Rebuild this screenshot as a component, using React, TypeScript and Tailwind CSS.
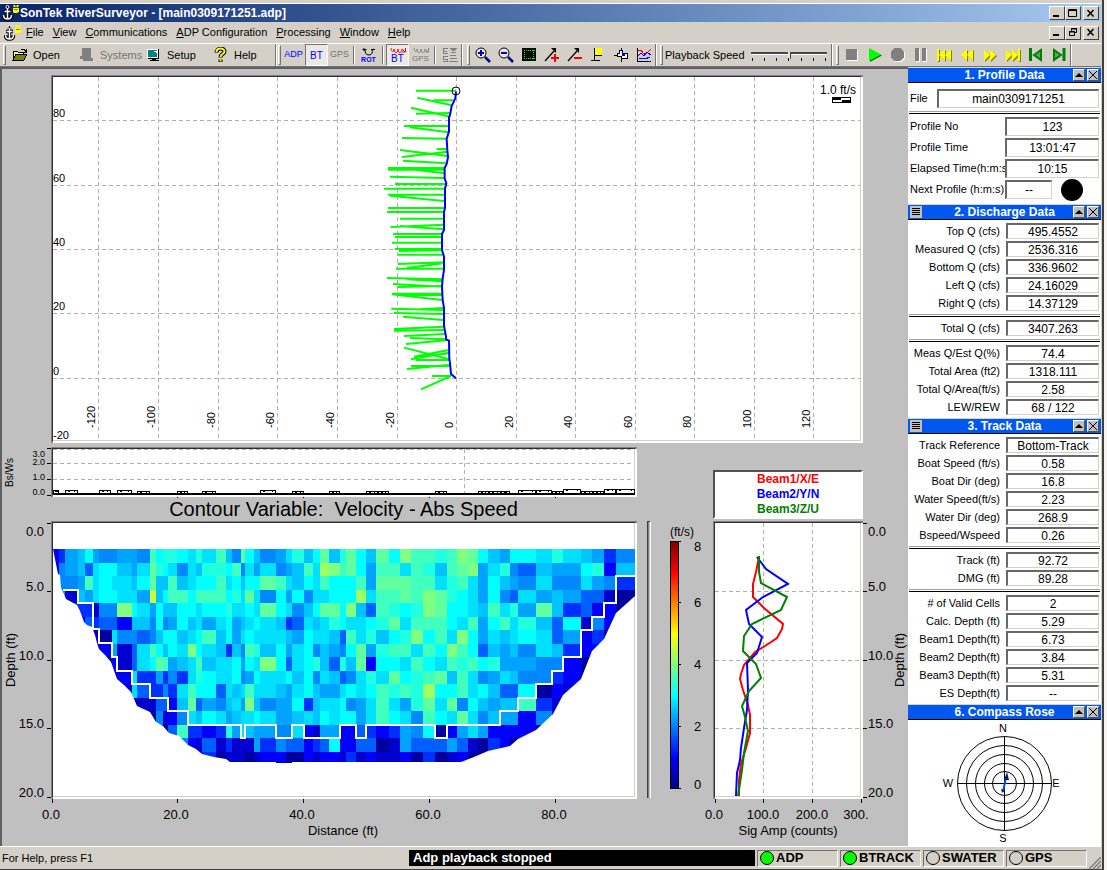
import { FC, ReactNode } from "react";

const raised = "border border-t-white border-l-white border-b-[#404040] border-r-[#404040] bg-[#d4d0c8]";

// Lower edge of each depth cell and left edge of each profile, in chart pixels
const rowEdges = [549, 563, 576, 590, 603, 617, 630, 644, 657, 671, 684, 698, 711, 725, 738, 752, 764];
const colEdges = [
  53, 59, 65, 78, 85, 93, 99, 112, 117, 132, 137, 150, 156, 163, 168, 177, 188, 196, 202, 216, 226, 232, 241, 245, 254,
  260, 276, 286, 292, 304, 313, 320, 329, 340, 346, 356, 366, 376, 389, 400, 411, 423, 435, 447, 457, 468, 478, 488, 500,
  510, 518, 536, 552, 563, 581, 592, 604, 616, 635,
];

const speedColors: Record<string, string> = {
  "0": "#00009f",
  "1": "#0000cf",
  "2": "#0000ff",
  "3": "#0030ff",
  "4": "#0060ff",
  "5": "#0088ff",
  "6": "#00a4ff",
  "7": "#00c4ff",
  "8": "#00e0ff",
  "9": "#00ffff",
  a: "#20ffdf",
  b: "#40ffbf",
  c: "#60ff9f",
  d: "#80ff80",
  e: "#a0ff60",
  f: "#c8ff38",
};

// One digit per cell, 0 is the slowest water
const speeds = [
  "23679655665b9aa98a8b75c97568a79c7ac97c9dbbabdc976998a87635",
  "25674899768ca98587aa9b5868567b8edbc96bb8ba7bcd68a547669a27",
  "5556b898879c77b7899b89799cb8798b999b6cccbb8ab8697658558653",
  "55176899886f79bb9bbb9a8c85969588999e8bbcbdca98695486764410",
  "00333155d98697799899a8898c98579cc9d74ba9adc9987b8a6c734220",
  "00024344277595697868967898734878a9889ac8bbb98b69b8a7491520",
  "000001085545799789b796898887698874b8a79ad9b8d9687898462300",
  "00000026148b9798d987375ba7968957659c6abb8b9db9476758732200",
  "000000021489cb678b7889698d9489a74a7c2998b98bab9a6665520000",
  "00000000283363538a988956988979587458a8c9abc7b8568755320000",
  "0000000018433538b994878b8876897668989babae99b8974490210000",
  "0000000000114427c465786d7566937889568b86ac8c597677b3100000",
  "0000000000005125879867889866787989968b985b98c8576625100000",
  "000000000000004b3323a6876655821662243236590268622220000000",
  "0000000000000005214131116354423492244016444641032000000000",
  "0000000000000000123011101220021221312112030120011000000000",
];

const riverBed =
  "53,549 58,574 60,575 61,588 63,592 66,599 77,605 80,611 84,622 87,625 92,627 95,635 97,643 99,649 105,655 111,662 117,679 124,685 131,692 137,706 150,712 156,722 163,726 169,733 179,736 188,745 196,749 202,754 214,757 226,759 230,762 276,762 276,763 292,763 292,762 461,762 474,757 488,751 510,746 518,739 536,730 553,714 563,695 581,679 592,651 604,639 616,613 635,596 635,549";

const goodCells =
  "M63 590H78V603H93V629H99V643H112V657H117V671H132V684H150V698H168V711H188V725H241V738H245V725H276V738H292V725H304V738H340V725H356V738H366V725H435V738H447V725H500V711H518V698H536V684H552V671H563V657H581V630H592V617H604V603H616V576H635";

const sticks =
  "M138 62H258M142 83L245 106M190 91H250M123 113L240 140M138 131L240 129M102 168H235M120 172L235 187M96 204L230 206M90 240L233 258M200 237H230M96 261L233 245M99 272L228 280M54 294H225M54 299H225M140 300L225 310M60 320L222 324M75 342H228M42 356H225M54 374H222M60 377L222 393M54 414H222M51 426H222M90 446H222M62 471L222 464M90 468L220 478M69 492H217M75 501H217M66 518H216M75 537H216M87 543L216 541M84 554H218M84 582L222 577M78 596H220M110 594L220 580M51 624L218 628M110 628L216 634M69 642L216 650M82 651L216 648M66 671H216M66 673L216 690M80 675H216M64 716L220 720M150 718L220 714M72 729L220 732M99 740L220 750M72 777L220 770M72 782L222 780M102 798L225 792M120 804L230 808M108 822L235 810M102 833L238 868M132 860L236 840M132 862L238 850M123 868L236 848M138 870H238M123 888H240M111 897L240 884M186 918H243M153 958L243 918";

const shipTrack =
  "258,65 256,85 245,108 240,135 237,142 237,185 230,206 232,240 234,262 230,282 224,294 224,325 229,340 225,356 225,414 222,426 222,480 216,492 216,540 222,560 222,600 218,625 216,650 218,690 222,714 222,768 228,800 228,808 237,812 238,865 240,880 243,912 258,925";

const ratioBars = [
  [53, 6, 3], [65, 13, 3], [99, 12, 3], [117, 15, 3], [137, 13, 2], [177, 11, 2], [202, 14, 2], [260, 16, 3],
  [292, 12, 2], [329, 11, 2], [366, 12, 2], [378, 11, 2], [435, 12, 2], [478, 11, 2], [489, 12, 2], [501, 9, 2],
  [518, 18, 3], [536, 16, 3], [552, 11, 2], [563, 18, 4], [581, 12, 2], [593, 11, 2], [604, 12, 4], [616, 19, 4],
];

const depthTicks = [
  { y: 523, base: 536, text: "0.0" },
  { y: 591, base: 591, text: "5.0" },
  { y: 660, base: 660, text: "10.0" },
  { y: 728, base: 728, text: "15.0" },
  { y: 797, base: 797, text: "20.0" },
];

// Sunken white plotting area
const Well = ({ x, y, w, h }: { x: number; y: number; w: number; h: number }) => (
  <g shapeRendering="crispEdges">
    <rect x={x} y={y} width={w} height={h} fill="#fff" />
    <path d={`M${x} ${y + h}V${y}H${x + w}V${y + 2}H${x + 2}V${y + h}Z`} fill="#808080" />
    <path d={`M${x + 1} ${y + h - 2}V${y + 1}H${x + w - 2}V${y + 2}H${x + 2}V${y + h - 2}Z`} fill="#303030" />
    <path d={`M${x + 2} ${y + h - 3}H${x + w - 3}V${y + 2}H${x + w - 2}V${y + h - 2}H${x + 2}Z`} fill="#d4d0c8" />
  </g>
);

const TrackChart: FC = () => (
  <svg viewBox="2 69 906 376" className="block h-auto w-full" role="img" aria-label="Ship track">
    <Well x={51} y={75} w={812} h={368} />
    <g stroke="#b0b0b0" strokeDasharray="4 3" shapeRendering="crispEdges">
      {[98, 158, 218, 277, 337, 397, 456, 516, 575, 635, 694, 754, 813].map((x) => (
        <path key={x} d={`M${x + 0.5} 77V440`} />
      ))}
      {[120, 185, 249, 313, 378].map((y) => (
        <path key={y} d={`M53 ${y + 0.5}H860`} />
      ))}
    </g>
    <g fontSize="11">
      {[98, 158, 218, 277, 337, 397, 456, 516, 575, 635, 694, 754, 813].map((x, i) => (
        <text key={x} transform={`translate(${x - 3} 428) rotate(-90)`}>
          {i * 20 - 120}
        </text>
      ))}
      {[117, 182, 246, 310, 375, 439].map((y, i) => (
        <text key={y} x="53" y={y}>
          {80 - i * 20}
        </text>
      ))}
      <text x="820" y="94" fontSize="12">1.0 ft/s</text>
    </g>
    <g transform="translate(370 70) scale(0.3333)" fill="none" strokeWidth="6">
      <path d={sticks} stroke="#00ff00" />
      <polyline points={shipTrack} stroke="#0000ff" />
    </g>
    <circle cx="456" cy="91" r="4" fill="none" stroke="#000" />
    <g shapeRendering="crispEdges">
      <rect x="832" y="97" width="19" height="6" />
      <rect x="841" y="98" width="9" height="2" fill="#fff" />
      <rect x="833" y="100" width="9" height="2" fill="#fff" />
    </g>
  </svg>
);

const RatioChart: FC = () => (
  <svg viewBox="2 445 641 53" className="block h-auto w-full" role="img" aria-label="Boat speed over water speed">
    <Well x={51} y={447} w={586} h={50} />
    <g stroke="#b0b0b0" strokeDasharray="4 3" shapeRendering="crispEdges">
      <path d="M53 449.5H634M53 463.5H634M53 479.5H634M464.5 449V494" />
    </g>
    <g shapeRendering="crispEdges">
      <rect x="53" y="493" width="582" height="2" />
      {ratioBars.map(([x, w, h]) => (
        <g key={x}>
          <rect x={x} y={493 - h} width={w} height={h + 1} />
          <rect x={x + 1} y={494 - h} width={w - 2} height={h - 1} fill="#fff" />
          <rect x={x + 3} y={494 - h} width="2" height="1" />
          <rect x={x + w - 4} y={494 - h} width="1" height="1" />
        </g>
      ))}
      <path d="M47 448.5H51M47 463.5H51M47 479.5H51M47 495.5H51M177.5 497V500M303.5 497V500M429.5 497V500M555.5 497V500" stroke="#000" />
    </g>
    <g fontSize="9" textAnchor="end">
      <text x="45" y="457">3.0</text>
      <text x="45" y="465">2.0</text>
      <text x="45" y="480">1.0</text>
      <text x="45" y="495">0.0</text>
    </g>
    <text transform="translate(13 487) rotate(-90)" fontSize="10">Bs/Ws</text>
  </svg>
);

const ContourChart: FC = () => (
  <svg viewBox="2 520 641 326" className="block h-auto w-full" role="img" aria-label="Velocity contour">
    <Well x={51} y={521} w={586} h={278} />
    <clipPath id="bed">
      <polygon points={riverBed} />
    </clipPath>
    <g clipPath="url(#bed)" shapeRendering="crispEdges">
      {speeds.map((row, r) =>
        colEdges.slice(0, -1).map((x, c) => (
          <rect
            key={`${r}-${c}`}
            x={x}
            y={rowEdges[r]}
            width={colEdges[c + 1] - x}
            height={rowEdges[r + 1] - rowEdges[r]}
            fill={speedColors[row[c]]}
          />
        ))
      )}
    </g>
    <path d={goodCells} fill="none" stroke="#fff" strokeWidth="2" shapeRendering="crispEdges" />
    <g fontSize="13" textAnchor="end">
      {depthTicks.map((t) => (
        <g key={t.text}>
          <path d={`M47 ${t.y + 0.5}H51`} stroke="#000" shapeRendering="crispEdges" />
          <text x="44" y={t.base}>{t.text}</text>
        </g>
      ))}
    </g>
    <g fontSize="13" textAnchor="middle">
      {[52, 177, 303, 429, 555].map((x, i) => (
        <g key={x}>
          <path d={`M${x + 0.5} 799V803`} stroke="#000" shapeRendering="crispEdges" />
          <text x={x - 1} y="819">{(i * 20).toFixed(1)}</text>
        </g>
      ))}
      <text x="343" y="835">Distance (ft)</text>
      <text transform="translate(15 660) rotate(-90)">Depth (ft)</text>
    </g>
  </svg>
);

const ColorBar: FC = () => (
  <svg viewBox="643 520 69 326" className="block h-auto w-full" role="img" aria-label="Speed scale">
    <defs>
      <linearGradient id="jet" x1="0" y1="0" x2="0" y2="1">
        <stop offset="0" stopColor="#800000" />
        <stop offset="0.125" stopColor="#ff0000" />
        <stop offset="0.375" stopColor="#ffff00" />
        <stop offset="0.625" stopColor="#00ffff" />
        <stop offset="0.875" stopColor="#0000ff" />
        <stop offset="1" stopColor="#000080" />
      </linearGradient>
    </defs>
    <g shapeRendering="crispEdges">
      <path d="M647.5 798V521.5H650" fill="none" stroke="#404040" />
      <path d="M648.5 798V522" fill="none" stroke="#808080" />
      <path d="M650.5 522V798" stroke="#fff" />
      <rect x="670.5" y="541.5" width="8" height="247" fill="url(#jet)" stroke="#000" />
      <path d="M678 541.5H681M678 602.5H681M678 664.5H681M678 726.5H681M678 788.5H681" stroke="#000" />
    </g>
    <g fontSize="13">
      <text x="670" y="536" fontSize="12">(ft/s)</text>
      {[551, 607, 669, 731, 789].map((y, i) => (
        <text key={y} x="694" y={y}>{8 - i * 2}</text>
      ))}
    </g>
  </svg>
);

const SignalChart: FC = () => (
  <svg viewBox="712 520 196 326" className="block h-auto w-full overflow-visible" role="img" aria-label="Signal amplitude">
    <Well x={713} y={521} w={150} h={278} />
    <g stroke="#b0b0b0" strokeDasharray="4 3" shapeRendering="crispEdges">
      <path d="M763.5 523V796M812.5 523V796M715 591.5H860M715 660.5H860M715 728.5H860" />
    </g>
    <g fill="none" strokeWidth="2">
      <polyline stroke="#ff0000" points="759,557 756,572 753,584 753,597 764,608 783,624 782,629 777,638 765,646 755,652 744,665 741,674 740,679 743,690 748,705 750,715 750,733 746,748 741,764 739,780 739,796" />
      <polyline stroke="#0000ff" points="757,557 766,569 788,584 763,597 746,610 749,624 762,637 757,653 747,663 748,690 747,710 744,728 741,748 740,760 737,773 736,796" />
      <polyline stroke="#008000" points="759,556 759,572 761,583 787,597 781,610 752,624 744,636 743,651 756,664 761,678 749,691 742,706 745,717 748,731 744,753 742,770 738,796" />
    </g>
    <g fontSize="13">
      {depthTicks.map((t) => (
        <g key={t.text}>
          <path d={`M863 ${t.y + 0.5}H867`} stroke="#000" shapeRendering="crispEdges" />
          <text x="868" y={t.base}>{t.text}</text>
        </g>
      ))}
      <path d="M715.5 799V803M763.5 799V803M812.5 799V803M861.5 799V803" stroke="#000" shapeRendering="crispEdges" />
      <g textAnchor="middle">
        <text x="714" y="819">0.0</text>
        <text x="763" y="819">100.0</text>
        <text x="812" y="819">200.0</text>
        <text x="856" y="819">300.</text>
        <text x="788" y="835">Sig Amp (counts)</text>
        <text transform="translate(904 660) rotate(-90)">Depth (ft)</text>
      </g>
    </g>
  </svg>
);

const Anchor: FC = () => (
  <svg viewBox="0 0 18 16" className="h-4 w-[18px] shrink-0" fill="none">
    <path d="M5.5 2v12M2 6.500h7M1.500 10c0 3 2 4 4 4s4-1 4-4" stroke="#000" strokeWidth="3.500" />
    <path d="M5.500 3v11M2.500 6.500h6M1.500 10c0 3 2 4 4 4s4-1 4-4" stroke="#fff" strokeWidth="1.500" />
    <circle cx="5.500" cy="2" r="1.500" fill="#000" stroke="#fff" />
    <path d="M11 3h6v4l-2 1h-3l-1-1z" fill="#ffff00" />
    <path d="M12 0l1 2M16 0l-1 2" stroke="#ffff00" strokeWidth="2" />
    <path d="M13 4v1M15 4v1" stroke="#000" />
  </svg>
);

const Icon = ({ children }: { children: ReactNode }) => (
  <svg viewBox="0 0 16 16" className="size-4 shrink-0" fill="none" shapeRendering="crispEdges">
    {children}
  </svg>
);

const WinButton = ({ label, children }: { label: string; children: ReactNode }) => (
  <button aria-label={label} className={`flex h-[14px] w-4 items-center justify-center ${raised}`}>
    <svg viewBox="0 0 10 9" className="h-[9px] w-[10px]" fill="none" stroke="#000">
      {children}
    </svg>
  </button>
);

const WinButtons = ({ restore }: { restore?: boolean }) => (
  <div className="ml-auto flex pr-[2px]">
    <WinButton label="Minimize">
      <path d="M1 7h6" strokeWidth="2" />
    </WinButton>
    <WinButton label={restore ? "Restore" : "Maximize"}>
      {restore ? <path d="M3.500 3V.5h5v4H7M3 1h6M1.500 3.500h5v4h-5zM1 4h6" /> : <path d="M.5.5h8v7h-8zM0 1.500h9" />}
    </WinButton>
    <span className="w-[2px]" />
    <WinButton label="Close">
      <path d="M1.500 1l6 6.500M7.500 1l-6 6.500" strokeWidth="1.500" />
    </WinButton>
  </div>
);

const Tool = ({ label, pressed, children }: { label: string; pressed?: boolean; children: ReactNode }) => (
  <button
    aria-label={label}
    className={
      pressed
        ? "flex h-[22px] w-[23px] shrink-0 flex-col items-center justify-center border border-t-neutral-500 border-l-neutral-500 border-r-white border-b-white bg-[#ebe9e5]"
        : "flex h-[22px] w-[23px] shrink-0 flex-col items-center justify-center"
    }
  >
    {children}
  </button>
);

const WideTool = ({ label, disabled, children }: { label: string; disabled?: boolean; children: ReactNode }) => (
  <button disabled={disabled} className="flex h-[22px] w-[67px] shrink-0 items-center gap-[5px] pl-[5px] disabled:text-neutral-500">
    <Icon>{children}</Icon>
    {label}
  </button>
);

const Grip: FC = () => <span className="mx-px h-5 w-[3px] shrink-0 border border-t-white border-l-white border-r-neutral-500 border-b-neutral-500" />;
const Divider: FC = () => <span className="mx-[2px] h-[18px] w-[2px] shrink-0 border-l border-l-neutral-500 border-r border-r-white" />;
const BandEnd: FC = () => <span className="h-[22px] w-[2px] shrink-0 border-l border-l-neutral-500 border-r border-r-white" />;

const Magnifier = ({ plus }: { plus?: boolean }) => (
  <svg viewBox="0 0 16 16" className="size-4" fill="none">
    <circle cx="6" cy="6" r="5" fill="#e8e8e8" stroke="#000" strokeWidth="1" />
    <path d={plus ? "M3 6h6M6 3v6" : "M3 6h6"} stroke="#0000c0" strokeWidth="2" />
    <path d="M10 10l5 5" stroke="#000080" strokeWidth="2.500" />
  </svg>
);

const ArrowUp = ({ plus }: { plus?: boolean }) => (
  <svg viewBox="0 0 16 16" className="size-4" fill="none">
    <path d="M1 14L10 4" stroke="#000" strokeWidth="1.200" />
    <path d="M7 1h5v5z" fill="#000" />
    <path d={plus ? "M7 11h8M11 7v8" : "M7 11h8"} stroke="#ff0000" strokeWidth="2" />
  </svg>
);

const Transport = ({ d, fill, shadow }: { d: string; fill: string; shadow: string }) => (
  <svg viewBox="0 0 16 16" className="size-4" fill="none">
    <path d={d} transform="translate(1 1)" fill={shadow} />
    <path d={d} fill={fill} />
  </svg>
);

const Toolbar: FC = () => (
  <div className="flex h-6 items-center overflow-hidden border-t border-t-white border-b border-b-neutral-500 text-[11px] whitespace-nowrap">
    <div className="flex shrink-0 items-center pl-[2px]">
      <Grip />
      <WideTool label="Open">
        <path d="M1 13V4h4l1 1h5v3" fill="#ffff80" stroke="#000" />
        <path d="M1 13l3-6h11l-3 6z" fill="#808000" stroke="#000" />
        <path d="M9 2.500h3l2 2M14.500 2v3h-3" stroke="#000" />
      </WideTool>
      <WideTool label="Systems" disabled>
        <path d="M3 1h9v10h2v3H4v-2H1V9h2z" fill="#808080" />
      </WideTool>
      <WideTool label="Setup">
        <rect x="1.500" y="2.500" width="10" height="8" fill="#008080" stroke="#fff" />
        <path d="M12.500 2v9H2M4 13.500h9M6 12h4" stroke="#000" />
        <path d="M8 4h2v2" stroke="#fff" />
      </WideTool>
      <WideTool label="Help">
        <g shapeRendering="geometricPrecision">
          <path d="M3.500 5.500c0-5 8-5 8-1 0 2.500-4 2.500-4 6M7.500 12.500v2.500" stroke="#000" strokeWidth="4" />
          <path d="M3.500 5c0-4.500 8-4.500 8-.5 0 2.500-4 2.500-4 5.500M7.500 12.500v2" stroke="#ffff00" strokeWidth="2" />
        </g>
      </WideTool>
      <BandEnd />
    </div>
    <div className="flex shrink-0 items-center">
      <Grip />
      <Tool label="ADP"><span className="text-[9px] text-[#0000ff]">ADP</span></Tool>
      <Tool label="Bottom track" pressed><span className="text-[10px] text-[#0000ff]">BT</span></Tool>
      <Tool label="GPS"><span className="text-[9px] text-neutral-500">GPS</span></Tool>
      <Divider />
      <Tool label="Rotate">
        <svg viewBox="0 0 14 8" className="h-2 w-[14px]" fill="none" stroke="#000">
          <path d="M2 0v3M0.500 1.500h4M3 2c0 3 1 5 4 5s4-3 3-5L12 1M9 1.500h4" />
        </svg>
        <span className="text-[7px] leading-[7px] font-bold text-[#0000ff]">ROT</span>
      </Tool>
      <Divider />
      <Tool label="Bottom track velocity" pressed>
        <svg viewBox="0 0 16 7" className="h-[7px] w-4" fill="none" stroke="#ff0000">
          <path d="M1 1c0 4 3 5 3 1 0 5 4 5 4 0 0 5 3 5 4 0l3 3M15.500 1v4h-4" />
        </svg>
        <span className="text-[10px] leading-[9px] text-[#0000ff]">BT</span>
      </Tool>
      <Tool label="GPS velocity">
        <svg viewBox="0 0 16 7" className="h-[7px] w-4" fill="none" stroke="#808080">
          <path d="M1 1c0 4 3 5 3 1 0 5 4 5 4 0 0 5 3 5 4 0l3 3M15.500 1v4h-4" />
        </svg>
        <span className="text-[8px] leading-[9px] text-neutral-500">GPS</span>
      </Tool>
      <Divider />
      <Tool label="Echo sounder">
        <Icon>
          <path d="M6 1.500H1.500v5H6M1.500 4H5M6 9.500H1.500V12H5.500v2.500H1M9 5.500h5M8 8.500h6M8 11.500h7M7 14.500h9" stroke="#808080" />
          <path d="M8 1h7l-2 3h-3z" fill="#808080" />
        </Icon>
      </Tool>
      <BandEnd />
    </div>
    <div className="flex shrink-0 items-center pl-[3px]">
      <Grip />
      <Tool label="Zoom in"><Magnifier plus /></Tool>
      <Tool label="Zoom out"><Magnifier /></Tool>
      <Tool label="Zoom extents">
        <Icon>
          <rect x="1" y="1" width="14" height="13" fill="#000" />
          <path d="M3 3.500h11M3 11.500h11M3.500 3v9M12.500 3v9" stroke="#00ff00" strokeDasharray="1 1" />
        </Icon>
      </Tool>
      <Tool label="Longer vectors"><ArrowUp plus /></Tool>
      <Tool label="Shorter vectors"><ArrowUp /></Tool>
      <Tool label="Flag">
        <Icon>
          <rect x="5" y="1" width="7" height="7" fill="#ffff00" />
          <path d="M4.500 1v13M1 13.500h9M5 8.500h7" stroke="#000" strokeWidth="1" />
        </Icon>
      </Tool>
      <Tool label="Center">
        <Icon>
          <path d="M1 8.500h4M13 8.500h2M8.500 1v4M8.500 11v4" stroke="#000" />
          <path d="M6 3h3v3h5v5H8V9H4V6h2z" fill="#fff" stroke="#000" />
          <rect x="9" y="6" width="3" height="3" fill="#0000ff" />
        </Icon>
      </Tool>
      <Tool label="Graphs">
        <Icon>
          <path d="M1.500 1v13.500H15" stroke="#000" />
          <path d="M2 4l3-1 3 4 3-1 4-4" stroke="#ff0000" />
          <path d="M2 9l3-3 3 3 3-4 4 3M3 12l3-1 3 1 5-2" stroke="#0000ff" />
        </Icon>
      </Tool>
      <BandEnd />
    </div>
    <div className="flex shrink-0 items-center pl-[2px]">
      <Grip />
      <label htmlFor="speed" className="w-[87px] pl-px">Playback Speed</label>
      <div className="flex w-[80px] flex-col pr-1">
        <input
          id="speed"
          type="range"
          min={0}
          max={6}
          defaultValue={3}
          className="h-[9px] w-full appearance-none bg-transparent [&::-webkit-slider-runnable-track]:h-[3px] [&::-webkit-slider-runnable-track]:border-b [&::-webkit-slider-runnable-track]:border-b-white [&::-webkit-slider-runnable-track]:bg-[#484848] [&::-webkit-slider-thumb]:h-[7px] [&::-webkit-slider-thumb]:w-[3px] [&::-webkit-slider-thumb]:appearance-none [&::-webkit-slider-thumb]:border-r [&::-webkit-slider-thumb]:border-r-[#404040] [&::-webkit-slider-thumb]:bg-[#e8e6e2]"
        />
        <div className="flex justify-between px-px">
          {[0, 1, 2, 3, 4, 5, 6].map((n) => (
            <span key={n} className="h-[3px] w-px bg-black" />
          ))}
        </div>
      </div>
      <BandEnd />
    </div>
    <div className="flex shrink-0 items-center pl-[2px]">
      <Grip />
      <Tool label="Stop"><Transport d="M2 2h11v11H2z" fill="#808080" shadow="#fff" /></Tool>
      <Tool label="Play"><Transport d="M2 1l12 6.500L2 14z" fill="#00ff00" shadow="#008000" /></Tool>
      <Tool label="Record"><Transport d="M4.500 1h6L14 4.500v6L10.500 14h-6L1 10.500v-6z" fill="#808080" shadow="#fff" /></Tool>
      <Tool label="Pause"><Transport d="M2 1h4v13H2zM9 1h4v13H9z" fill="#808080" shadow="#fff" /></Tool>
      <Tool label="First"><Transport d="M1 2h2v12H1zM9 2v12L3 8zM15 2v12L9 8z" fill="#ffff00" shadow="#808000" /></Tool>
      <Tool label="Rewind"><Transport d="M8 2v12L2 8zM14 2v12L8 8z" fill="#ffff00" shadow="#808000" /></Tool>
      <Tool label="Forward"><Transport d="M2 2v12l6-6zM8 2v12l6-6z" fill="#ffff00" shadow="#808000" /></Tool>
      <Tool label="Last"><Transport d="M1 2v12l6-6zM7 2v12l6-6zM13 2h2v12h-2z" fill="#ffff00" shadow="#808000" /></Tool>
      <Tool label="Previous file">
        <svg viewBox="0 0 16 16" className="size-4" fill="none" stroke="#008000" strokeWidth="2">
          <path d="M2.500 1v13" strokeWidth="3" />
          <path d="M13 3v10L6 8z" fill="#60a060" />
        </svg>
      </Tool>
      <Tool label="Next file">
        <svg viewBox="0 0 16 16" className="size-4" fill="none" stroke="#008000" strokeWidth="2">
          <path d="M13 1v13" strokeWidth="3" />
          <path d="M3 3v10l7-5z" fill="#60a060" />
        </svg>
      </Tool>
      <BandEnd />
    </div>
  </div>
);

const PanelHeader = ({ title, menu }: { title: string; menu?: boolean }) => (
  <div className="flex h-4 items-center border-t border-t-neutral-300 border-b border-b-black bg-[#0058f0] px-[2px]">
    <div className="w-[26px]">
      {menu && (
        <button aria-label={`${title} menu`} className="flex size-3 items-center justify-center bg-[#c0c0c0]">
          <svg viewBox="0 0 8 8" className="size-2" stroke="#000" shapeRendering="crispEdges">
            <path d="M0 .5h8M0 2.500h8M0 4.500h8M0 6.500h8" />
          </svg>
        </button>
      )}
    </div>
    <h3 className="flex-1 text-center text-[12px] leading-[14px] font-bold text-white">{title}</h3>
    <div className="flex gap-[2px]">
      <button aria-label={`Collapse ${title}`} className="flex size-3 items-center justify-center border border-t-white border-l-white border-r-neutral-600 border-b-neutral-600 bg-[#c0c0c0]">
        <svg viewBox="0 0 8 8" className="size-2">
          <path d="M0 6h8L4 2z" />
        </svg>
      </button>
      <button aria-label={`Close ${title}`} className="flex size-3 items-center justify-center border border-t-white border-l-white border-r-neutral-600 border-b-neutral-600 bg-[#c0c0c0]">
        <svg viewBox="0 0 8 8" className="size-2" stroke="#000">
          <path d="M0 0l8 8M8 0L0 8" />
        </svg>
      </button>
    </div>
  </div>
);

const field = "min-w-0 border border-t-2 border-l-2 border-t-[#686868] border-l-[#686868] border-r-[#d4d0c8] border-b-[#d4d0c8] bg-white text-center text-[12px]";

const Row = ({ name, value }: { name: string; value: string }) => (
  <div className="flex h-[18px] items-center pr-[2px]">
    <label htmlFor={name} className="w-[98px] shrink-0 pr-[6px] text-right text-[11px] whitespace-nowrap">
      {name}
    </label>
    <input id={name} readOnly value={value} className={`h-4 flex-1 ${field}`} />
  </div>
);

const ProfileRow = ({ name, value, next }: { name: string; value: string; next?: boolean }) => (
  <div className="flex h-[21px] items-center pr-[2px]">
    <label htmlFor={name} className="w-[97px] shrink-0 pl-[2px] text-[11px] whitespace-nowrap">
      {name}
    </label>
    <input id={name} readOnly value={value} className={next ? `h-[19px] w-[47px] ${field}` : `h-[19px] flex-1 ${field}`} />
    {next && <span className="ml-[9px] size-[22px] rounded-full bg-black" />}
  </div>
);

const Rule: FC = () => <div className="my-[2px] mr-px ml-px h-[3px] border-t border-t-neutral-400 border-b border-b-black" />;

const Compass: FC = () => (
  <svg viewBox="908 720 193 126" className="block h-auto w-full" role="img" aria-label="Compass rose">
    <g fill="none" stroke="#000">
      {[12, 20, 29, 38, 47].map((r) => (
        <circle key={r} cx="1004.5" cy="783.5" r={r} />
      ))}
      <path d="M957 783.500H1052M1004.500 736V831" />
    </g>
    <path d="M1003 792L1006 777" stroke="#0050f0" strokeWidth="2" />
    <path d="M1007 772l2 8h-5zM1001 789l3 1-2 3z" fill="#002060" />
    <g fontSize="11" textAnchor="middle">
      <text x="1003" y="732">N</text>
      <text x="1003" y="842">S</text>
      <text x="948" y="787">W</text>
      <text x="1056" y="787">E</text>
    </g>
  </svg>
);

const Sidebar: FC = () => (
  <aside className="w-[193px] shrink-0 bg-white">
    <PanelHeader title="1. Profile Data" />
    <div className="pt-1 pb-1">
      <div className="flex h-[22px] items-center pr-[2px]">
        <label htmlFor="file" className="w-[29px] shrink-0 pl-[2px] text-[11px]">File</label>
        <input id="file" readOnly value="main0309171251" className={`h-[19px] flex-1 ${field}`} />
      </div>
      <Rule />
      <ProfileRow name="Profile No" value="123" />
      <ProfileRow name="Profile Time" value="13:01:47" />
      <ProfileRow name="Elapsed Time(h:m:s" value="10:15" />
      <ProfileRow name="Next Profile (h:m:s)" value="--" next />
    </div>
    <PanelHeader title="2. Discharge Data" menu />
    <div className="py-[2px]">
      <Row name="Top Q (cfs)" value="495.4552" />
      <Row name="Measured Q (cfs)" value="2536.316" />
      <Row name="Bottom Q (cfs)" value="336.9602" />
      <Row name="Left Q (cfs)" value="24.16029" />
      <Row name="Right Q (cfs)" value="14.37129" />
      <Rule />
      <Row name="Total Q (cfs)" value="3407.263" />
      <Rule />
      <Row name="Meas Q/Est Q(%)" value="74.4" />
      <Row name="Total Area (ft2)" value="1318.111" />
      <Row name="Total Q/Area(ft/s)" value="2.58" />
      <Row name="LEW/REW" value="68 / 122" />
    </div>
    <PanelHeader title="3. Track Data" menu />
    <div className="py-[2px]">
      <Row name="Track Reference" value="Bottom-Track" />
      <Row name="Boat Speed (ft/s)" value="0.58" />
      <Row name="Boat Dir (deg)" value="16.8" />
      <Row name="Water Speed(ft/s)" value="2.23" />
      <Row name="Water Dir (deg)" value="268.9" />
      <Row name="Bspeed/Wspeed" value="0.26" />
      <Rule />
      <Row name="Track (ft)" value="92.72" />
      <Row name="DMG (ft)" value="89.28" />
      <Rule />
      <Row name="# of Valid Cells" value="2" />
      <Row name="Calc. Depth (ft)" value="5.29" />
      <Row name="Beam1 Depth(ft)" value="6.73" />
      <Row name="Beam2 Depth(ft)" value="3.84" />
      <Row name="Beam3 Depth(ft)" value="5.31" />
      <Row name="ES Depth(ft)" value="--" />
    </div>
    <PanelHeader title="6. Compass Rose" />
    <Compass />
  </aside>
);

const Lamp = ({ label, on }: { label: string; on?: boolean }) => (
  <div className="flex h-[17px] w-[81px] shrink-0 items-center gap-[2px] border border-t-neutral-500 border-l-neutral-500 border-r-white border-b-white pl-[2px] text-[13px] font-bold">
    <span className={on ? "size-[14px] rounded-full border border-black bg-[#00ff00]" : "size-[14px] rounded-full border border-black"} />
    {label}
  </div>
);

const menus = ["File", "View", "Communications", "ADP Configuration", "Processing", "Window", "Help"];

export default function App() {
  return (
    <div className="flex w-full bg-[#f4f3f0] pr-[3px] font-['Liberation_Sans',Arial,sans-serif] text-black">
      <div className="min-w-0 flex-1 border-r-2 border-b border-[#404040] bg-[#d4d0c8] pr-px">
        <div className="h-1 border-b border-b-white" />
        <header className="flex h-[18px] items-center bg-linear-to-r from-[#0a246a] to-[#a6caf0] pl-[2px]">
          <Anchor />
          <h1 className="text-[12px] font-bold whitespace-nowrap text-white">SonTek RiverSurveyor - [main0309171251.adp]</h1>
          <WinButtons />
        </header>
        <nav className="flex h-[21px] items-center gap-[9px] pl-1 text-[11px] whitespace-nowrap">
          <div className="-mr-[5px]">
            <Anchor />
          </div>
          {menus.map((m) => (
            <button key={m}>
              <span className="underline">{m[0]}</span>
              {m.slice(1)}
            </button>
          ))}
          <WinButtons restore />
        </nav>
        <Toolbar />
        <div className="flex">
          <main className="min-w-0 flex-1 border-t-2 border-l-2 border-[#606060] bg-[#c0c0c0]">
            <TrackChart />
            <div className="grid grid-cols-[641fr_69fr_196fr] items-end">
              <div className="min-w-0">
                <RatioChart />
                <h2 className="h-[22px] pl-[42px] text-center text-[20px] leading-[22px] whitespace-pre">
                  {"Contour Variable:  Velocity - Abs Speed"}
                </h2>
                <ContourChart />
              </div>
              <ColorBar />
              <div className="min-w-0">
                <div className="mr-[45px] mb-px ml-px border-2 border-t-neutral-600 border-l-neutral-600 border-r-white border-b-white bg-white text-center text-[12px] leading-[15px] font-bold">
                  <p className="text-[#ff0000]">Beam1/X/E</p>
                  <p className="text-[#0000ff]">Beam2/Y/N</p>
                  <p className="text-[#008000]">Beam3/Z/U</p>
                </div>
                <SignalChart />
              </div>
            </div>
          </main>
          <Sidebar />
        </div>
        <footer className="flex h-[23px] items-center gap-[2px] border-t border-t-white pl-[2px]">
          <span className="w-[405px] text-[11px]">For Help, press F1</span>
          <div className="h-4 flex-1 bg-black pl-1 text-[13px] leading-4 font-bold text-white">Adp playback stopped</div>
          <Lamp label="ADP" on />
          <Lamp label="BTRACK" on />
          <Lamp label="SWATER" />
          <Lamp label="GPS" />
          <svg viewBox="0 0 12 12" className="h-3 w-3 self-end" stroke="#808080">
            <path d="M0 12L12 0M4 12L12 4M8 12L12 8" strokeWidth="1.500" />
          </svg>
        </footer>
      </div>
    </div>
  );
}
